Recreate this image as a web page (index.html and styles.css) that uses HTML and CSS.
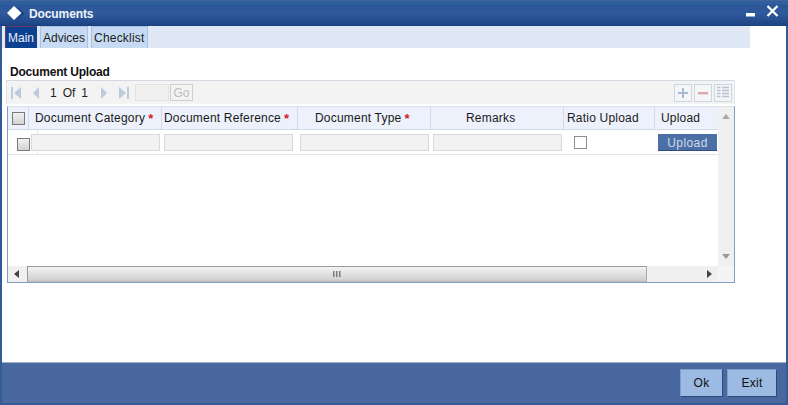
FILE: index.html
```html
<!DOCTYPE html>
<html lang="en">
<head>
<meta charset="utf-8">
<title>Documents</title>
<link rel="stylesheet" href="styles.css">
</head>
<body>
<div class="window">
  <header class="titlebar">
    <svg class="logo" width="18" height="15" viewBox="0 0 18 15"><path d="M9.500 1 L17.500 7.500 L9.500 14 L15 7.500 Z" fill="#123a72"/><path d="M7 0 L14.500 7 L7 14 L0 7 Z" fill="#fff"/></svg>
    <span class="title">Documents</span>
    <span class="controls">
      <svg class="min" width="10" height="4" viewBox="0 0 10 4"><rect width="9" height="3.500" y="0" fill="#fff"/></svg>
      <svg class="close" width="13" height="12" viewBox="0 0 13 12"><path d="M1.500 1 L11.500 11 M11.500 1 L1.500 11" stroke="#fff" stroke-width="2.200" fill="none"/></svg>
    </span>
  </header>
  <nav class="tabs">
    <span class="tab active">Main</span>
    <span class="tab">Advices</span>
    <span class="tab wide">Checklist</span>
  </nav>
  <main class="content">
    <h2 class="section">Document Upload</h2>
    <div class="toolbar">
      <svg class="nav first" width="10" height="12" viewBox="0 0 10 12"><rect x="0" y="0" width="2" height="12"/><path d="M10 0 V12 L3 6 Z"/></svg>
      <svg class="nav prev" width="6" height="12" viewBox="0 0 6 12"><path d="M6 0 V12 L0 6 Z"/></svg>
      <span class="pager one">1</span><span class="pager of">Of</span><span class="pager">1</span>
      <svg class="nav next" width="6" height="12" viewBox="0 0 6 12"><path d="M0 0 V12 L6 6 Z"/></svg>
      <svg class="nav last" width="10" height="12" viewBox="0 0 10 12"><path d="M0 0 V12 L7 6 Z"/><rect x="8" y="0" width="2" height="12"/></svg>
      <span class="page-input"></span>
      <span class="go">Go</span>
      <span class="tools">
        <span class="tool"><svg width="14" height="14" viewBox="0 0 14 14"><path d="M6 2 H8 V6 H12 V8 H8 V12 H6 V8 H2 V6 H6 Z" fill="#a9bad6"/></svg></span>
        <span class="tool"><svg width="14" height="14" viewBox="0 0 14 14"><rect x="2" y="6" width="10" height="2.400" fill="#dca8a8"/></svg></span>
        <span class="tool"><svg width="14" height="14" viewBox="0 0 14 14"><path d="M1 1.500 H4.500 M6 1.500 H13 M1 4.500 H4.500 M6 4.500 H13 M1 7.500 H4.500 M6 7.500 H13 M1 10.500 H4.500 M6 10.500 H13" stroke="#b5c1d4" stroke-width="1.500" fill="none"/></svg></span>
      </span>
    </div>
    <div class="grid-box">
      <div class="grid-top">
        <div class="grid-main">
          <div class="row head">
            <div class="cell check-cell"><span class="checkbox grey"></span></div>
            <div class="cell pad-cat">Document Category<b class="req">*</b></div>
            <div class="cell pad-ref">Document Reference<b class="req">*</b></div>
            <div class="cell pad-type">Document Type<b class="req">*</b></div>
            <div class="cell pad-rem">Remarks</div>
            <div class="cell pad-ratio">Ratio Upload</div>
            <div class="cell pad-up">Upload</div>
          </div>
          <div class="row body">
            <div class="cell check-cell"><span class="checkbox grey"></span></div>
            <div class="cell"><span class="input"></span></div>
            <div class="cell"><span class="input"></span></div>
            <div class="cell"><span class="input"></span></div>
            <div class="cell"><span class="input"></span></div>
            <div class="cell ratio"><span class="checkbox"></span></div>
            <div class="cell up"><span class="upload">Upload</span></div>
          </div>
        </div>
        <div class="vscroll">
          <svg width="8" height="5" viewBox="0 0 8 5"><path d="M4 0 L8 5 H0 Z" fill="#aaa"/></svg>
          <svg width="8" height="5" viewBox="0 0 8 5"><path d="M4 5 L8 0 H0 Z" fill="#999"/></svg>
        </div>
      </div>
      <div class="hscroll">
        <span class="arrow-l"><svg width="5" height="8" viewBox="0 0 5 8"><path d="M0 4 L5 0 V8 Z" fill="#444"/></svg></span>
        <span class="thumb"><span class="grip">III</span></span>
        <span class="arrow-r"><svg width="5" height="8" viewBox="0 0 5 8"><path d="M5 4 L0 0 V8 Z" fill="#444"/></svg></span>
        <span class="corner"></span>
      </div>
    </div>
  </main>
  <footer class="footer">
    <button class="btn ok">Ok</button>
    <button class="btn exit">Exit</button>
  </footer>
</div>
</body>
</html>
```
FILE: styles.css
```css
* { box-sizing: border-box; }
html, body { margin: 0; padding: 0; }
body { width: 788px; height: 405px; overflow: hidden; background: #fff; font-family: "Liberation Sans", Arial, sans-serif; font-size: 12px; color: #1a1a1a; }
.window { width: 788px; height: 405px; display: flex; flex-direction: column; border: solid #335c96; border-width: 0 2px 2px 2px; }
.titlebar { height: 26px; margin: 0 -2px; padding: 5px 9px 0 7px; display: flex; align-items: flex-start; background: linear-gradient(#2f5e9f 0, #2f5e9f 3px, #2a5696 4px, #2f5a9c 12px, #1d4585 24px, #12336a 26px); border-top: 1px solid #41659c; }
.title { margin-left: 4px; font-size: 12px; line-height: 16px; font-weight: bold; letter-spacing: -0.1px; color: #eef2f8; }
.controls { margin-left: auto; display: flex; align-items: flex-start; gap: 10px; }
.min { margin-top: 7px; }
.close { margin-top: -1px; }
.tabs { width: 748px; height: 22px; display: flex; gap: 3px; padding-left: 3px; background: #e1e8f5; }
.tab { height: 22px; padding: 0 2px; line-height: 23px; font-size: 12px; background: #c6daf3; border: solid #a8c2e2; border-width: 1px 1px 0 1px; color: #1c1c1c; }
.tab.wide { letter-spacing: 0.2px; }
.tab.active { width: 32px; background: #0c4191; color: #e9eff8; border-color: #6a3b62 #0c4191 #0c4191 #6a3b62; }
.content { flex: 1; padding: 0 0 0 4px; background: #fff; }
.section { margin: 0 0 0 4px; height: 32px; padding-top: 17px; font-size: 12px; line-height: 14px; font-weight: bold; letter-spacing: -0.2px; color: #111; }
.toolbar { width: 729px; height: 24px; display: flex; align-items: center; padding-left: 4px; background: #f3f3f3; border-top: 1px solid #d3d8e2; border-left: 1px solid #e4e7ec; border-right: 1px solid #e4e7ec; }
.nav { fill: #bccade; flex: none; }
.prev { margin-left: 12px; }
.pager { font-size: 12px; line-height: 14px; padding-top: 1px; color: #222; margin-left: 6px; }
.pager.one { margin-left: 11px; }
.pager.of { margin-left: 6px; }
.next { margin-left: 13px; }
.last { margin-left: 12px; }
.page-input { width: 34px; height: 17px; margin-left: 6px; background: #f0f0f0; border: 1px solid #e2e2e2; }
.go { width: 23px; height: 17px; margin-left: 1px; font-size: 12px; line-height: 16px; text-align: center; color: #bdbdbd; background: #f3f3f3; border: 1px solid #cfcfcf; }
.tools { margin-left: auto; margin-right: 2px; display: flex; gap: 2px; }
.tool { width: 18px; height: 18px; display: flex; align-items: center; justify-content: center; border: 1px solid #ced6e2; background: #f5f5f5; }
.grid-box { width: 728px; height: 177px; margin: 2px 0 0 1px; display: flex; flex-direction: column; border: 1px solid #7f9fc4; border-top-color: #d8e0ec; }
.grid-top { flex: 1; display: flex; min-height: 0; }
.grid-main { width: 710px; }
.row { display: grid; grid-template-columns: 21px 133px 136px 133px 133px 91px 63px; }
.head { height: 23px; background: #edf1fb; border-bottom: 1px solid #d3d9e6; }
.head .cell { display: flex; align-items: center; line-height: 14px; letter-spacing: 0.2px; border-right: 1px solid #d3d9e6; font-size: 12px; }
.head .cell:last-child { border-right: 0; }
.head .check-cell { padding-left: 4px; }
.pad-cat { padding-left: 6px; }
.pad-ref { padding-left: 2px; }
.pad-type { padding-left: 17px; }
.pad-rem { padding-left: 35px; }
.pad-ratio { padding-left: 3px; }
.pad-up { padding-left: 6px; }
.req { color: #d41a2a; font-weight: bold; margin-left: 3px; font-size: 13px; position: relative; top: 1px; }
.body { height: 25px; border-bottom: 1px solid #dfe4ee; background: linear-gradient(#e6eaf2, #e6eaf2) 29px 0 / 1px 100% no-repeat; }
.body .cell { display: flex; align-items: center; padding-left: 2px; }
.body .check-cell { padding: 4px 0 0 9px; }
.body .ratio { padding: 1px 0 0 10px; }
.body .up { padding-left: 3px; }
.checkbox { display: block; flex: none; width: 13px; height: 13px; background: #fff; border: 1px solid #8f8f8f; }
.checkbox.grey { background: linear-gradient(#f2f2f2, #d2d2d2); border-color: #7a7a7a; }
.input { display: block; width: 129px; height: 17px; background: #f2f2f2; border: 1px solid #d8d8d8; }
.upload { display: block; width: 59px; height: 17px; font-size: 12px; line-height: 19px; letter-spacing: 0.4px; text-align: center; color: #cfdaea; background: #4c6fa6; border-bottom: 1px solid #2d4d80; }
.vscroll { width: 16px; display: flex; flex-direction: column; justify-content: space-between; align-items: center; padding: 7px 0 7px; background: #f0f0f0; }
.hscroll { height: 16px; display: flex; align-items: stretch; background: #f0f0f0; }
.arrow-l { width: 19px; display: flex; align-items: center; justify-content: center; padding-right: 3px; }
.thumb { width: 620px; display: flex; align-items: center; justify-content: center; background: linear-gradient(#f3f3f3, #d4d4d4 85%, #c8c8c8); border: 1px solid #9a9a9a; border-bottom-color: #bbb; border-right-color: #aaa; }
.grip { font-size: 9px; line-height: 9px; letter-spacing: 0.5px; color: #333; }
.arrow-r { width: 70px; display: flex; align-items: center; justify-content: flex-end; padding-right: 5px; }
.corner { flex: 1; background: #f4f4f4; }
.footer { height: 41px; display: flex; justify-content: flex-end; align-items: flex-start; gap: 4px; padding: 6px 9px 0 0; background: #49689f; border-top: 1px solid #9db1cf; }
.btn { height: 28px; padding: 0; font-family: inherit; font-size: 12px; font-weight: normal; letter-spacing: 0.3px; color: #111; background: #9dbbe2; border: 1px solid; border-color: #7f9fca #2e4a75 #2e4a75 #7f9fca; }
.ok { width: 43px; }
.exit { width: 50px; }
```
